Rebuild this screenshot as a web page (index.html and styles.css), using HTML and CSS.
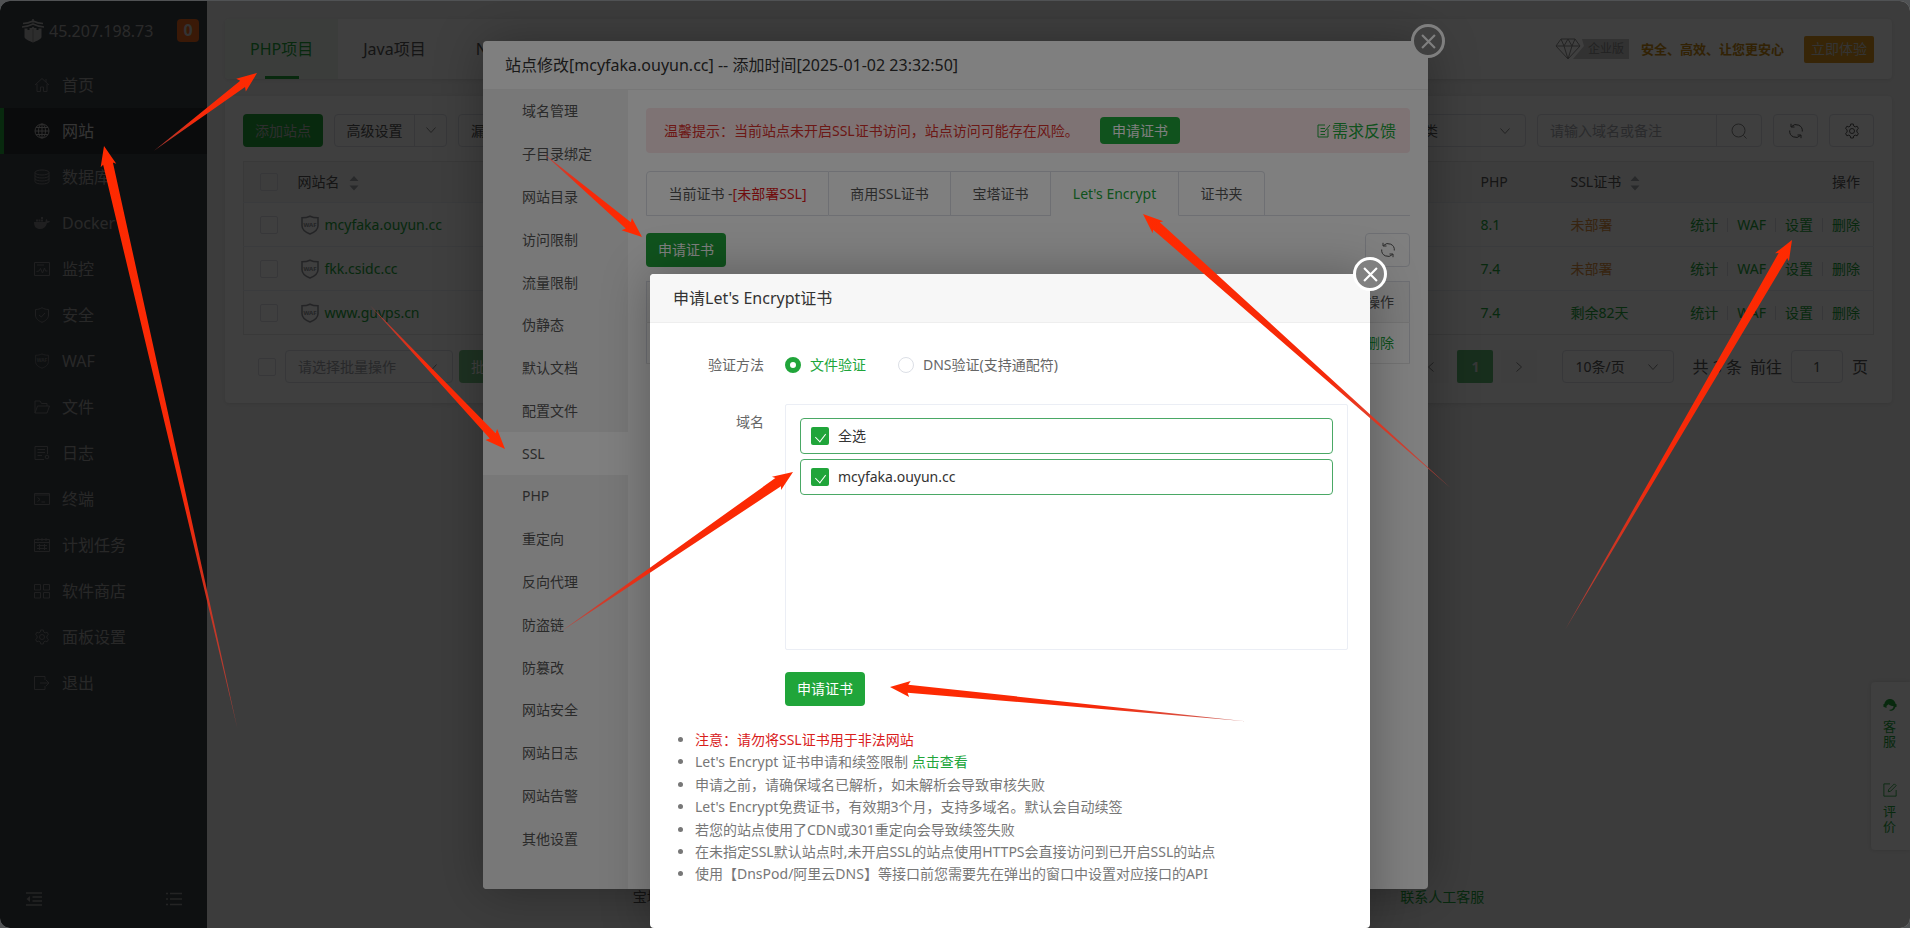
FILE: index.html
```html
<!DOCTYPE html>
<html lang="zh-CN">
<head>
<meta charset="utf-8">
<title>宝塔面板 - 网站</title>
<link rel="stylesheet" href="styles.css">
</head>
<body>
<svg class="defs" width="0" height="0" aria-hidden="true">
  <defs>
    <symbol id="i-down" viewBox="0 0 12 12"><path d="M1.500 3.500 6 8.500l4.500-5"/></symbol>
    <symbol id="i-refresh" viewBox="0 0 16 16"><path d="M3.500 3.500A6.300 6.300 0 0 1 14.300 8.500M12.500 12.500A6.300 6.300 0 0 1 1.700 7.500M6.500 4H3V.8M9.500 12H13v3.200"/></symbol>
    <symbol id="i-gear" viewBox="0 0 16 16"><circle cx="8" cy="8" r="2.500"/><path d="M6.700 1h2.600l.4 2 1.500.9 1.900-.7 1.300 2.300-1.500 1.300v2.400l1.500 1.300-1.300 2.300-1.900-.7-1.500.9-.4 2H6.700l-.4-2-1.500-.9-1.900.7-1.300-2.300 1.500-1.300V6.800L1.600 5.500l1.300-2.300 1.900.7L6.300 3z"/></symbol>
    <symbol id="i-waf" viewBox="0 0 18 20"><path d="M9 1.200c2.500 1.200 5 1.600 8 1.600v8c0 4-3.500 6.500-8 8.200-4.500-1.700-8-4.200-8-8.200v-8c3 0 5.500-.4 8-1.600z"/><text x="9" y="11.500">WAF</text></symbol>
    <symbol id="i-sort" viewBox="0 0 10 16"><path d="M5 1 9.500 6h-9zM5 15.500 .5 10.500h9z"/></symbol>
    <linearGradient id="fade" x1="0" x2="1" y1="0" y2="0"><stop offset="0" stop-color="#ff2a00"/><stop offset=".6" stop-color="#f5290a"/><stop offset="1" stop-color="#c04038" stop-opacity=".8"/></linearGradient>
  </defs>
</svg>
<div class="app">
  <aside class="sidebar">
    <div class="brand">
      <svg class="brand-logo" viewBox="0 0 22 24"><path d="M11 0v3.500M1 4.500c4 0 7-1 10-2.500 3 1.500 6 2.500 10 2.500M0 8c5 0 8-1.500 11-3 3 1.500 6 3 11 3" fill="none" stroke="#b4b4b4" stroke-width="1.500"/><path d="M2.500 9.500h3v1.500h2V9h2l1.500-1.500L12.500 9h2v2h2V9.500h3V18c0 2-5 4-8.500 5.500C7.500 22 2.500 20 2.500 18z" fill="#b4b4b4"/><path d="M11 10v13" stroke="#888"/></svg>
      <span class="brand-ip">45.207.198.73</span>
      <span class="brand-badge">0</span>
    </div>
    <nav class="nav">
      <a href="#"><svg viewBox="0 0 16 16"><path d="M1 8 8 1.500 15 8M3 7v7.500h3.500V10h3v4.500H13V7M12 2v3"/></svg>首页</a>
      <a href="#" class="active"><svg viewBox="0 0 16 16"><circle cx="8" cy="8" r="7"/><ellipse cx="8" cy="8" rx="3.500" ry="7"/><path d="M8 1v14M1 8h14M2 4.500h12M2 11.500h12"/></svg>网站</a>
      <a href="#"><svg viewBox="0 0 16 16"><ellipse cx="8" cy="3.500" rx="7" ry="2.500"/><path d="M1 3.500v9c0 3.300 14 3.300 14 0v-9M1 6.500c0 3.300 14 3.300 14 0M1 9.500c0 3.300 14 3.300 14 0"/></svg>数据库</a>
      <a href="#"><svg viewBox="0 0 16 16"><path class="fill" d="M0 7h11.500c0-1.500.3-2.300 1-3 .8.700 1 1.500.8 2.200.9-.2 2-.1 2.700.4-.6 1-1.700 1.500-3 1.400C12 12 9.500 14 6 14 2.500 14 0 12 0 7zM2 4.500h2v2H2zM4.500 4.500h2v2h-2zM7 4.500h2v2H7zM7 2h2v2H7z"/></svg>Docker</a>
      <a href="#"><svg viewBox="0 0 16 16"><path d="M.5 1.500h15v13H.5zM3 4h7M2.500 10.500 5 10l1.500-2.500L8.500 12l2-5 1 3h2"/></svg>监控</a>
      <a href="#"><svg viewBox="0 0 16 16"><path d="M8 .7c2 1.200 4 1.800 6.500 1.800V8c0 3.500-3 6-6.500 7.300C4.500 14 1.500 11.500 1.500 8V2.500C4 2.500 6 1.900 8 .7zM5 8l2.300 2L11 6"/></svg>安全</a>
      <a href="#"><svg viewBox="0 0 18 20"><use href="#i-waf"/></svg>WAF</a>
      <a href="#"><svg viewBox="0 0 16 16"><path d="M1 14V2h5l1.500 2.500H13V7M1 14 3.500 7h12L13 14z"/></svg>文件</a>
      <a href="#"><svg viewBox="0 0 16 16"><path d="M10 14.500H1v-13h12.500V9M3.500 4.500H11M3.500 7.500H11M3.500 10.500H8"/><circle cx="13" cy="12" r="1.800"/></svg>日志</a>
      <a href="#"><svg viewBox="0 0 16 16"><path d="M.5 2.500h15v11H.5zM.5 4h15M3.500 6.500 6 8.500l-2.500 2M7.500 11H11"/></svg>终端</a>
      <a href="#"><svg viewBox="0 0 16 16"><path d="M.5 2.500h15v12H.5zM.5 5.500h15M4 1v3M8 1v3M12 1v3M3 8.500h10M3 11.500h10M5.500 7v6M10.500 7v6"/></svg>计划任务</a>
      <a href="#"><svg viewBox="0 0 16 16"><path d="M.5 1.500h6v5.500h-6zM9.500 1.500h6v5.500h-6zM.5 9.500h6V15h-6zM9.500 9.500h6V15h-6z"/></svg>软件商店</a>
      <a href="#"><svg viewBox="0 0 16 16"><use href="#i-gear"/></svg>面板设置</a>
      <a href="#"><svg viewBox="0 0 16 16"><path d="M11 5V1.500H.5v13H11V11M6 8h9M12 5l3 3-3 3"/></svg>退出</a>
    </nav>
    <div class="side-tools">
      <button aria-label="收起"><svg viewBox="0 0 16 14"><path d="M0 1h16M6.500 5H16M6.500 9H16M0 13h16" stroke-width="1.500"/><path class="fill" d="M4 4v6L.5 7z"/></svg></button>
      <button aria-label="菜单"><svg viewBox="0 0 16 14"><path d="M0 1.500h2M4 1.500h12M0 7h2M4 7h12M0 12.500h2M4 12.500h12" stroke-width="1.500"/></svg></button>
    </div>
  </aside>

  <main class="main">
    <div class="content">
      <section class="card tabs-card">
        <a class="ptab on" href="#">PHP项目</a>
        <a class="ptab" href="#">Java项目</a>
        <a class="ptab" href="#">Node项目</a>
        <div class="promo">
          <div class="promo-text">
            <svg class="gem" viewBox="0 0 26 22"><path d="M6 1h14l5 7-12 13L1 8zM1 8h24M6 1l3 7 4 13 4-13 3-7M13 1 9 8M13 1l4 7"/></svg>
            <span class="ribbon">企业版</span>
            <strong>安全、高效、让您更安心</strong>
          </div>
          <button class="btn-gold">立即体验</button>
        </div>
      </section>

      <section class="card list-card">
        <div class="toolbar">
          <button class="btn green">添加站点</button>
          <div class="split"><button>高级设置</button><button aria-label="更多"><svg class="chev"><use href="#i-down"/></svg></button></div>
          <button class="btn plain">漏洞扫描</button>
          <div class="spacer"></div>
          <div class="select cat"><select aria-label="分类"><option>全部分类</option></select><svg class="chev"><use href="#i-down"/></svg></div>
          <div class="search"><input type="text" placeholder="请输入域名或备注" aria-label="搜索"><button aria-label="搜索"><svg class="ico" viewBox="0 0 16 16"><circle cx="7.500" cy="7.500" r="6.500"/><path d="m12.500 12.500 3 3"/></svg></button></div>
          <button class="icon-btn" aria-label="刷新"><svg class="ico"><use href="#i-refresh"/></svg></button>
          <button class="icon-btn" aria-label="设置"><svg class="ico"><use href="#i-gear"/></svg></button>
        </div>
        <table class="sites">
          <colgroup><col class="c-check"><col><col class="c-php"><col class="c-ssl"><col class="c-ops"></colgroup>
          <thead><tr><th><input type="checkbox" aria-label="全选"></th><th>网站名<svg class="sort"><use href="#i-sort"/></svg></th><th>PHP</th><th>SSL证书<svg class="sort"><use href="#i-sort"/></svg></th><th class="right">操作</th></tr></thead>
          <tbody>
            <tr><td><input type="checkbox" aria-label="mcyfaka.ouyun.cc"></td><td class="site"><span><svg class="waf"><use href="#i-waf"/></svg><a href="#">mcyfaka.ouyun.cc</a></span></td><td><a href="#">8.1</a></td><td><a href="#" class="warn">未部署</a></td><td class="ops"><span><a href="#">统计</a><a href="#">WAF</a><a href="#">设置</a><a href="#">删除</a></span></td></tr>
            <tr><td><input type="checkbox" aria-label="fkk.csidc.cc"></td><td class="site"><span><svg class="waf"><use href="#i-waf"/></svg><a href="#">fkk.csidc.cc</a></span></td><td><a href="#">7.4</a></td><td><a href="#" class="warn">未部署</a></td><td class="ops"><span><a href="#">统计</a><a href="#">WAF</a><a href="#">设置</a><a href="#">删除</a></span></td></tr>
            <tr><td><input type="checkbox" aria-label="www.guvps.cn"></td><td class="site"><span><svg class="waf"><use href="#i-waf"/></svg><a href="#">www.guvps.cn</a></span></td><td><a href="#">7.4</a></td><td><a href="#">剩余82天</a></td><td class="ops"><span><a href="#">统计</a><a href="#">WAF</a><a href="#">设置</a><a href="#">删除</a></span></td></tr>
          </tbody>
        </table>
        <div class="pager">
          <input type="checkbox" aria-label="全选">
          <div class="select batch"><select aria-label="批量操作"><option>请选择批量操作</option></select><svg class="chev"><use href="#i-down"/></svg></div>
          <button class="btn green off">批量操作</button>
          <div class="spacer"></div>
          <button class="pg side" aria-label="上一页"><svg class="chev prev"><use href="#i-down"/></svg></button>
          <button class="pg cur">1</button>
          <button class="pg side" aria-label="下一页"><svg class="chev next"><use href="#i-down"/></svg></button>
          <div class="select size"><select aria-label="每页条数"><option>10条/页</option></select><svg class="chev"><use href="#i-down"/></svg></div>
          <span class="total">共 3 条</span>
          <label class="goto">前往<input type="text" value="1">页</label>
        </div>
      </section>
    </div>
    <footer class="foot"><span>宝塔Linux面板</span><a href="#">联系人工客服</a></footer>
  </main>

  <div class="float-bar">
    <a href="#"><svg viewBox="0 0 16 16"><path class="fill" d="M8 1c3.500 0 6 2.500 6.300 5.500l1.200.5v3l-1.500.5c-.5 2-2 3.500-4 4H7.500v-1.200c2.500.2 4.500-1.300 4.500-4.300C9.500 9 7.500 8.500 6.500 7 5.500 8 4 8.500 4 9.500v2L2 10.500.5 10V7l1.200-.5C2 3.500 4.500 1 8 1z"/></svg><span>客服</span></a>
    <a href="#"><svg viewBox="0 0 16 16"><path d="M8 1H1v14h14V8M6 10l.5-2.500L13 1l2 2-6.500 6.500z"/></svg><span>评价</span></a>
  </div>

  <div class="mask"></div>
  <section class="dialog site-dialog">
    <button class="close" aria-label="关闭"><svg viewBox="0 0 14 14"><path d="m1 1 12 12M13 1 1 13"/></svg></button>
    <h2 class="dialog-title">站点修改[mcyfaka.ouyun.cc] -- 添加时间[2025-01-02 23:32:50]</h2>
    <div class="dialog-body">
      <nav class="menu">
        <a href="#">域名管理</a><a href="#">子目录绑定</a><a href="#">网站目录</a><a href="#">访问限制</a><a href="#">流量限制</a><a href="#">伪静态</a><a href="#">默认文档</a><a href="#">配置文件</a><a href="#" class="on">SSL</a><a href="#">PHP</a><a href="#">重定向</a><a href="#">反向代理</a><a href="#">防盗链</a><a href="#">防篡改</a><a href="#">网站安全</a><a href="#">网站日志</a><a href="#">网站告警</a><a href="#">其他设置</a>
      </nav>
      <div class="pane">
        <div class="alert"><span>温馨提示：当前站点未开启SSL证书访问，站点访问可能存在风险。</span><button class="btn green small">申请证书</button><a class="feedback" href="#"><svg viewBox="0 0 14 14"><path d="M8 1H1v12h10V5M3.500 4.500H8M3.500 7.500H8M3.500 10.500H8M8 7l5-6"/></svg>需求反馈</a></div>
        <div class="ssl-tabs"><a href="#">当前证书 -<em>[未部署SSL]</em></a><a href="#">商用SSL证书</a><a href="#">宝塔证书</a><a href="#" class="on">Let's Encrypt</a><a href="#">证书夹</a></div>
        <div class="row"><button class="btn green">申请证书</button><button class="icon-btn" aria-label="刷新"><svg class="ico"><use href="#i-refresh"/></svg></button></div>
        <table class="certs"><thead><tr><th>操作</th></tr></thead><tbody><tr><td><a href="#">删除</a></td></tr></tbody></table>
      </div>
    </div>
  </section>

  <div class="mask"></div>
  <section class="dialog cert-dialog">
    <button class="close" aria-label="关闭"><svg viewBox="0 0 14 14"><path d="m1 1 12 12M13 1 1 13"/></svg></button>
    <h2 class="dialog-title">申请Let's Encrypt证书</h2>
    <form class="form">
      <div class="field radios"><span class="label">验证方法</span>
        <label class="radio picked"><input type="radio" name="m" checked>文件验证</label>
        <label class="radio"><input type="radio" name="m">DNS验证(支持通配符)</label>
      </div>
      <div class="field"><span class="label">域名</span>
        <div class="domains">
          <label><input type="checkbox" checked>全选</label>
          <label><input type="checkbox" checked>mcyfaka.ouyun.cc</label>
        </div>
      </div>
      <div class="field"><span class="label"></span><button type="button" class="btn green">申请证书</button></div>
    </form>
    <ul class="notes">
      <li class="red">注意：请勿将SSL证书用于非法网站</li>
      <li>Let's Encrypt 证书申请和续签限制 <a href="#">点击查看</a></li>
      <li>申请之前，请确保域名已解析，如未解析会导致审核失败</li>
      <li>Let's Encrypt免费证书，有效期3个月，支持多域名。默认会自动续签</li>
      <li>若您的站点使用了CDN或301重定向会导致续签失败</li>
      <li>在未指定SSL默认站点时,未开启SSL的站点使用HTTPS会直接访问到已开启SSL的站点</li>
      <li>使用【DnsPod/阿里云DNS】等接口前您需要先在弹出的窗口中设置对应接口的API</li>
    </ul>
  </section>
</div>

<svg class="arrows" viewBox="0 0 1910 928" width="1910" height="928" aria-hidden="true">
  <path transform="translate(257 73) rotate(143)" d="M0 0 20-8 18-4 129 0 18 4 20 8z"/>
  <path transform="translate(104 146) rotate(77.100)" d="M0 0 20-8 18-5 597 0 18 5 20 8z"/>
  <path transform="translate(642 237) rotate(220.300)" d="M0 0 20-8 18-4 131 0 18 4 20 8z"/>
  <path transform="translate(505 449) rotate(226.800)" d="M0 0 20-8 18-4 197 0 18 4 20 8z"/>
  <path transform="translate(1143 214) rotate(41.700)" d="M0 0 20-8 18-5 412 0 18 5 20 8z"/>
  <path transform="translate(1792 240) rotate(120.200)" d="M0 0 20-8 18-5 451 0 18 5 20 8z"/>
  <path transform="translate(793 472) rotate(145.500)" d="M0 0 20-8 18-5 283 0 18 5 20 8z"/>
  <path transform="translate(890 687) rotate(5.500)" d="M0 0 20-8 18-4 357 0 18 4 20 8z"/>
</svg>
</body>
</html>
```
FILE: styles.css
```css
* { box-sizing: border-box; }
body {
  margin: 0;
  background: #505254;
  color: #555;
  font-family: "Noto Sans", "Noto Sans CJK SC", sans-serif;
  font-size: 14px;
  line-height: 20px;
  overflow: hidden;
}
a { color: #20a53a; text-decoration: none; }
button, input, select { font: inherit; color: inherit; margin: 0; padding: 0; border: 0; background: none; }
h2 { margin: 0; font-weight: 400; }
svg { fill: none; stroke: currentColor; flex: none; }
.defs { position: absolute; }
.fill { fill: currentColor; stroke: none; }
.spacer { flex: 1; }

.app {
  position: relative;
  display: flex;
  height: calc(100vh - 1px);
  margin-top: 1px;
  border-radius: 10px;
  overflow: hidden;
  background: #f2f2f2;
}

/* sidebar */
.sidebar { display: flex; flex-direction: column; width: 207px; background: #3a4046; color: #a8a8a8; }
.brand { display: flex; align-items: center; height: 61px; padding: 0 8px 2px 22px; font-size: 16px; }
.brand-logo { width: 22px; height: 24px; stroke: none; }
.brand-ip { margin-left: 5px; }
.brand-badge {
  margin-left: auto; width: 22px; height: 23px; border-radius: 4px;
  background: #e8641c; color: #ccc; font-weight: 700; line-height: 23px; text-align: center;
}
.nav { display: flex; flex-direction: column; flex: 1; }
.nav a {
  display: flex; align-items: center; gap: 12px; height: 46px; padding-left: 30px;
  border-left: 4px solid transparent; color: #a0a0a0; font-size: 16px;
}
.nav a svg { width: 16px; height: 16px; color: #7c7e80; }
.nav .active { background: #2a2c30; border-left-color: #20a53a; color: #d4d4d4; }
.nav .active svg { color: #b8b8b8; }
.side-tools { display: flex; justify-content: space-between; padding: 0 25px 22px 26px; }
.side-tools svg { display: block; width: 16px; height: 14px; color: #909090; }

/* main area */
.main { display: flex; flex-direction: column; flex: 1; min-width: 0; }
.content { display: flex; flex-direction: column; gap: 17px; flex: 1; padding: 18px 18px 0; }
.card { background: #fcfcfc; border-radius: 4px; box-shadow: 0 1px 4px rgba(0, 0, 0, .1); }
.tabs-card { display: flex; height: 60px; overflow: hidden; }
.ptab { display: flex; align-items: center; padding: 0 25px; color: #555; font-size: 16px; position: relative; }
.ptab.on { background: #eef7ef; color: #20a53a; }
.ptab.on::after { content: ""; position: absolute; left: 50%; bottom: 0; width: 34px; height: 3px; margin-left: -17px; background: #20a53a; }
.promo { display: flex; align-items: center; gap: 20px; margin-left: auto; padding-right: 18px; }
.promo-text { display: flex; align-items: center; color: #c88a10; font-size: 13px; }
.gem { width: 26px; height: 22px; color: #909090; }
.ribbon {
  width: 56px; height: 20px; margin: 0 12px 0 -8px; padding-left: 15px;
  background: #c8c8c8; color: #8a8a8a; font-size: 12px;
  clip-path: polygon(9px 0, 100% 0, 100% 100%, 0 100%, 11px 7px);
}
.btn-gold { width: 70px; height: 27px; border-radius: 2px; background: #dc961c; color: #d0d0d0; }

.list-card { padding: 18px 18px 20px; }
.toolbar { display: flex; gap: 11px; height: 33px; }
.btn { height: 34px; padding: 0 12px; border-radius: 4px; white-space: nowrap; }
.toolbar .btn, .pager .btn { height: 33px; }
.green { background: #20a53a; color: #fff; }
.toolbar .green { color: #bbb; }
.plain, .split, .select, .search, .icon-btn { border: 1px solid #dcdfe6; border-radius: 4px; }
.split { display: flex; width: 113px; }
.split button:first-child { flex: 1; }
.split button:last-child { width: 32px; border-left: 1px solid #dcdfe6; }
.chev { width: 12px; height: 12px; color: #888; }
.select { position: relative; display: flex; align-items: center; height: 33px; }
.select select { appearance: none; width: 100%; height: 100%; padding-left: 12px; }
.select .chev { position: absolute; right: 14px; }
.cat { width: 157px; }
.search { display: flex; width: 225px; }
.search input { flex: 1; min-width: 0; padding-left: 12px; }
.search input::placeholder { color: #a8abb2; }
.search button { width: 45px; border-left: 1px solid #dcdfe6; color: #888; display: flex; align-items: center; justify-content: center; }
.icon-btn { width: 45px; display: flex; align-items: center; justify-content: center; }
.ico { width: 16px; height: 16px; }

input[type="checkbox"], input[type="radio"] { appearance: none; display: block; width: 18px; height: 18px; border: 1px solid #dcdfe6; border-radius: 2px; flex: none; }
table { width: 100%; border-collapse: collapse; table-layout: fixed; }
th { font-weight: 400; text-align: left; }
.sites { margin-top: 14px; border: 1px solid #e4e4e4; }
.sites th { height: 41px; background: #f6f6f6; }
.sites td { height: 44px; border-top: 1px solid #ebeef5; }
.sites th, .sites td { padding: 0 13px; }
.sites th:first-child, .sites td:first-child { padding: 0 0 0 16px; }
.c-check { width: 41px; }
.c-php { width: 90px; }
.c-ssl { width: 116px; }
.c-ops { width: 200px; }
.sort { width: 10px; height: 16px; margin-left: 9px; fill: #a0a4ab; stroke: none; vertical-align: middle; }
.right { text-align: right !important; }
.site span { display: flex; align-items: center; gap: 6px; padding-left: 3px; }
.waf, .nav svg { overflow: visible; }
.waf { width: 18px; height: 20px; color: #909399; stroke-width: 1.5; }
symbol text { font: 700 6px "Noto Sans", sans-serif; fill: currentColor; stroke: none; text-anchor: middle; }
.sites .warn { color: #dc9040; }
.ops span { display: flex; justify-content: flex-end; align-items: center; }
.ops a + a { margin-left: 9px; padding-left: 9px; border-left: 1px solid #dcdfe6; line-height: 14px; }

.pager { display: flex; align-items: center; margin-top: 15px; padding-left: 15px; }
.batch { width: 168px; margin: 0 6px 0 9px; color: #a0a3aa; }
.off { opacity: .6; }
.pg { width: 36px; height: 33px; border-radius: 2px; display: flex; align-items: center; justify-content: center; margin-right: 8px; }
.side { background: #f8f8f8; }
.cur { background: #5fb873; color: #ddd; font-weight: 700; }
.prev { transform: rotate(90deg); }
.next { transform: rotate(-90deg); }
.size { width: 112px; margin: 0 18px 0 17px; }
.total, .goto { font-size: 16px; white-space: nowrap; }
.goto { display: flex; align-items: center; margin: 0 6px 0 8px; }
.goto input { width: 52px; height: 33px; margin: 0 9px; border: 1px solid #dcdfe6; border-radius: 4px; text-align: center; font-size: 14px; }

.foot { display: flex; justify-content: space-between; align-self: center; height: 61px; width: 50%; padding-top: 20px; color: #555; }

.float-bar {
  position: absolute; right: 0; top: 681px; width: 39px; height: 168px; padding: 16px 12px;
  display: flex; flex-direction: column; justify-content: space-between;
  background: #fcfcfc; border-radius: 4px 0 0 4px; box-shadow: 0 0 5px rgba(0, 0, 0, .15);
}
.float-bar svg { display: block; width: 14px; height: 14px; margin-bottom: 7px; }
.float-bar span { display: block; width: 14px; font-size: 13px; line-height: 15px; }

/* windows */
.mask { position: absolute; inset: 0; background: rgba(0, 0, 0, .5); }
.dialog { position: absolute; background: #fff; border-radius: 4px; box-shadow: 1px 1px 50px rgba(0, 0, 0, .3); display: flex; flex-direction: column; }
.dialog-title { height: 49px; border-bottom: 1px solid #eee; padding-left: 22px; color: #333; font-size: 16px; line-height: 49px; border-radius: 4px 4px 0 0; }
.close {
  position: absolute; right: -17px; top: -17px; width: 34px; height: 34px; border: 3px solid #fff; border-radius: 50%;
  background: #808080; color: #fff; display: flex; align-items: center; justify-content: center;
}
.close svg { width: 15px; height: 15px; stroke-width: 2; }
.site-dialog { left: 50%; top: 40px; width: 945px; margin-left: -472px; height: 848px; }
.dialog-body { display: flex; flex: 1; }
.menu { width: 145px; padding-bottom: 29px; background: #f0f0f0; display: flex; flex-direction: column; border-radius: 0 0 0 4px; }
.menu a { flex: 1; display: flex; align-items: center; padding-left: 39px; color: #555; }
.menu .on { background: #fff; }
.pane { flex: 1; padding: 18px; }
.alert { display: flex; align-items: center; height: 45px; padding: 0 14px 0 18px; border-radius: 4px; background: #fde6e9; color: #d9302c; }
.alert span { flex: none; width: 436px; white-space: nowrap; }
.small { height: 27px; }
.feedback { display: flex; align-items: center; margin-left: auto; font-size: 16px; }
.feedback svg { width: 14px; height: 14px; margin-right: 1px; }
.ssl-tabs { display: flex; height: 45px; margin-top: 18px; }
.ssl-tabs::after { content: ""; flex: 1; border-bottom: 1px solid #dcdfe6; }
.ssl-tabs a { flex: none; display: flex; align-items: center; justify-content: center; border: 1px solid #dcdfe6; border-left: 0; color: #555; width: 100px; }
.ssl-tabs a:first-child { width: 183px; border-left: 1px solid #dcdfe6; border-radius: 4px 0 0 0; }
.ssl-tabs a:nth-child(2) { width: 122px; }
.ssl-tabs a:nth-child(4) { width: 128px; }
.ssl-tabs a:last-child { width: 86px; border-radius: 0 4px 0 0; }
.ssl-tabs .on { border-bottom-color: transparent; color: #20a53a; }
.ssl-tabs em { font-style: normal; color: #e01818; }
.row { display: flex; justify-content: space-between; margin: 17px 0 14px; }
.certs { border: 1px solid #dcdfe6; }
.certs th, .certs td { height: 41px; padding: 0 15px; text-align: right; border-bottom: 1px solid #e6e6e6; }
.certs th { background: #f7f7f7; }

.cert-dialog { left: 650px; top: 273px; width: 720px; height: 654px; }
.cert-dialog .dialog-title { background: #f7f7f7; padding-left: 23px; }
.form { padding: 33px 22px 0 0; display: flex; flex-direction: column; gap: 22px; }
.field { display: flex; color: #666; }
.label { width: 114px; margin-right: 21px; text-align: right; line-height: 36px; flex: none; }
.radios { align-items: center; height: 18px; margin-bottom: 8px; }
.radio { display: flex; align-items: center; gap: 9px; margin-right: 32px; }
.field input[type="radio"] { width: 16px; height: 16px; border-radius: 50%; }
.field input[type="radio"]:checked { border: 5px solid #20a53a; }
.picked { color: #20a53a; }
.domains { flex: 1; height: 246px; padding: 13px 14px; border: 1px solid #ebeef5; border-radius: 2px; }
.domains label { display: flex; align-items: center; gap: 9px; height: 36px; margin-bottom: 5px; padding-left: 10px; border: 1px solid #4aa865; border-radius: 4px; color: #333; }
.domains input:checked { position: relative; border: 0; background: #20a53a; }
.domains input:checked::after { content: ""; position: absolute; left: 6px; top: 4px; width: 6px; height: 9px; border: solid #fff; border-width: 0 1px 1px 0; transform: rotate(45deg) skew(8deg); }
.notes { margin: 23px 0 0; padding-left: 45px; color: #777; line-height: 1.6; }
.notes .red { color: #d9201c; }
.notes .red::marker { color: #777; }

.arrows { position: absolute; left: 0; top: 0; pointer-events: none; fill: url(#fade); stroke: none; }
```
